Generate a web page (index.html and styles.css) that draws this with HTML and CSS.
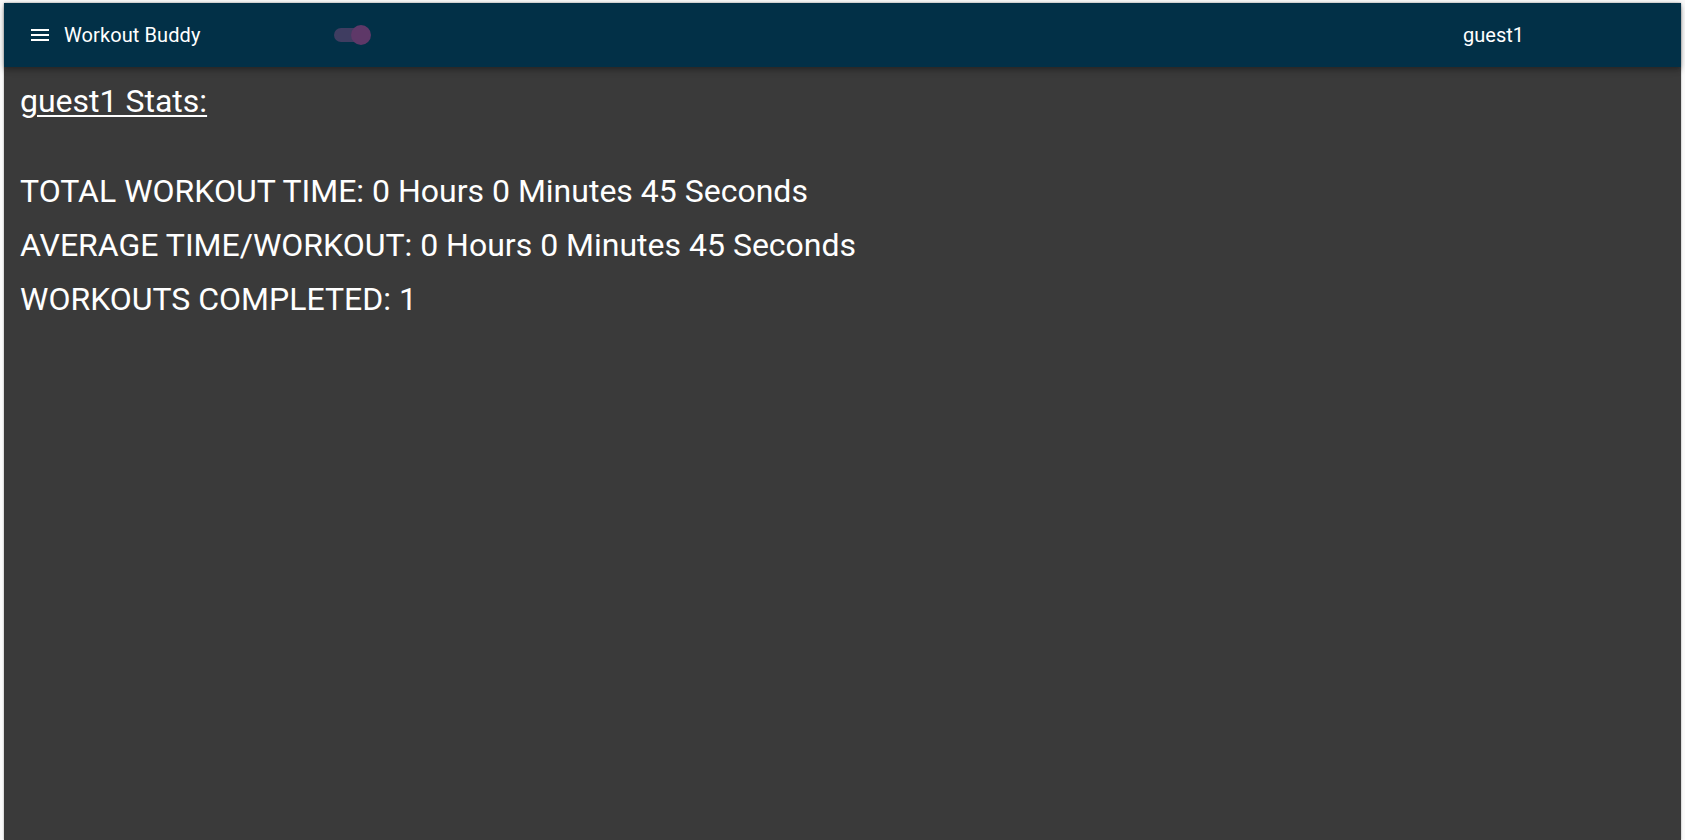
FILE: index.html
```html
<!DOCTYPE html>
<html lang="en">
<head>
<meta charset="utf-8">
<title>Workout Buddy</title>
<link rel="stylesheet" href="styles.css">
</head>
<body>
<div class="app">
  <header class="appbar">
    <button class="menu-btn" aria-label="menu">
      <svg viewBox="0 0 24 24" width="24" height="24"><path fill="#fff" d="M3 18h18v-2H3v2zm0-5h18v-2H3v2zm0-7v2h18V6H3z"/></svg>
    </button>
    <div class="title">Workout Buddy</div>
    <div class="switch">
      <span class="track"></span>
      <span class="thumb"></span>
    </div>
    <div class="spacer"></div>
    <div class="user">guest1</div>
  </header>
  <main class="content">
    <h2 class="stats-title">guest1 Stats:</h2>
    <div class="stats">
      <p class="stat">TOTAL WORKOUT TIME: 0 Hours 0 Minutes 45 Seconds</p>
      <p class="stat">AVERAGE TIME/WORKOUT: 0 Hours 0 Minutes 45 Seconds</p>
      <p class="stat">WORKOUTS COMPLETED: 1</p>
    </div>
  </main>
</div>
</body>
</html>
```

FILE: styles.css
```css
html, body {
  margin: 0;
  padding: 0;
  height: 100%;
}
body {
  background: #fafafa;
  font-family: Roboto, "Liberation Sans", Arial, sans-serif;
  overflow: hidden;
}
.app {
  margin: 3px 4px 0 4px;
  height: calc(100% - 3px);
  background: #3a3a3a;
  display: flex;
  flex-direction: column;
  box-shadow: 0 0 2px rgba(0,0,0,0.35);
}
.appbar {
  height: 64px;
  flex: 0 0 64px;
  background: #023047;
  color: #fff;
  display: flex;
  align-items: center;
  padding: 0 24px;
  box-shadow: 0 2px 4px -1px rgba(0,0,0,0.2), 0 4px 5px 0 rgba(0,0,0,0.14), 0 1px 10px 0 rgba(0,0,0,0.12);
  position: relative;
  z-index: 1;
}
.menu-btn {
  background: none;
  border: 0;
  padding: 12px;
  margin-left: -12px;
  margin-right: 0;
  display: flex;
  cursor: pointer;
}
.title {
  font-size: 20px;
  font-weight: 400;
  letter-spacing: 0.1px;
}
.switch {
  position: relative;
  width: 34px;
  height: 20px;
  margin-left: 133px;
  display: flex;
  align-items: center;
}
.track {
  width: 34px;
  height: 14px;
  border-radius: 7px;
  background: #3f3d61;
}
.thumb {
  position: absolute;
  right: -3px;
  top: 0;
  width: 20px;
  height: 20px;
  border-radius: 50%;
  background: #5e3868;
}
.spacer {
  flex: 1;
}
.user {
  font-size: 20px;
  margin-right: 133px;
}
.content {
  flex: 1;
  padding: 16px 16px;
  color: #fff;
}
.stats-title {
  margin: 0;
  font-size: 32px;
  font-weight: 400;
  text-decoration: underline;
  text-underline-offset: 3px;
  text-decoration-thickness: 2px;
  line-height: 37px;
}
.stats {
  margin-top: 44px;
}
.stat {
  margin: 0;
  font-size: 32px;
  line-height: 54px;
}
```
